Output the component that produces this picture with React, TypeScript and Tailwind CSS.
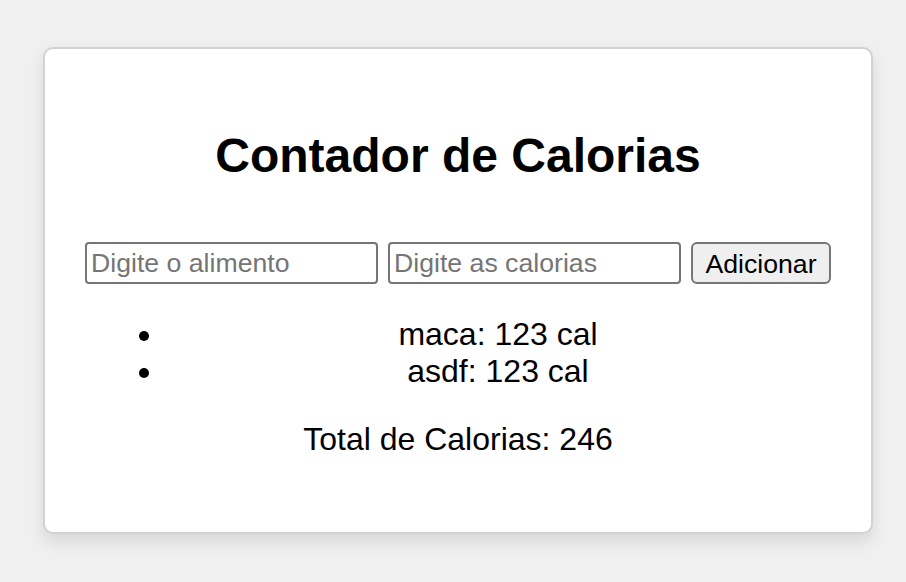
import { useState } from "react";

type Item = { name: string; calories: number };

const initialItems: Item[] = [
  { name: "maca", calories: 123 },
  { name: "asdf", calories: 123 },
];

export default function App() {
  const [items, setItems] = useState<Item[]>(initialItems);
  const [food, setFood] = useState("");
  const [calories, setCalories] = useState("");

  const total = items.reduce((sum, item) => sum + item.calories, 0);

  const addItem = () => {
    const value = Number(calories);
    if (!food || !value) return;
    setItems((prev) => [...prev, { name: food, calories: value }]);
    setFood("");
    setCalories("");
  };

  return (
    <div className="min-h-[582px] bg-[#f0f0f0] pt-[47px] pl-[43px] font-['Liberation_Sans',Arial,sans-serif] text-black">
      <div className="w-[830px] rounded-[10px] border-2 border-[#d2d2d2] bg-white px-[40px] pt-[79px] pb-[74px] shadow-[0_8px_16px_rgba(0,0,0,0.1)]">
        <h1 className="text-center text-[48px] leading-[55px] font-bold">Contador de Calorias</h1>

        <div className="mt-[59px] flex justify-center gap-[10px]">
          <input
            className="h-[42px] w-[293px] rounded-[4px] border-2 border-[#767676] px-[4px] text-[26.67px] placeholder:text-[#757575] outline-none"
            placeholder="Digite o alimento"
            value={food}
            onChange={(e) => setFood(e.target.value)}
          />
          <input
            className="h-[42px] w-[293px] rounded-[4px] border-2 border-[#767676] px-[4px] text-[26.67px] placeholder:text-[#757575] outline-none"
            placeholder="Digite as calorias"
            type="text"
            value={calories}
            onChange={(e) => setCalories(e.target.value)}
          />
          <button
            className="h-[42px] w-[142px] rounded-[6px] border-2 border-[#767676] bg-[#efefef] text-[26.67px]"
            type="button"
            onClick={addItem}
          >
            Adicionar
          </button>
        </div>

        <ul className="mt-[32px] list-disc pl-[80px] text-center text-[32px] leading-[37px]">
          {items.map((item, index) => (
            <li key={index}>
              {item.name}: {item.calories} cal
            </li>
          ))}
        </ul>

        <p className="mt-[31px] text-center text-[32px] leading-[37px]">Total de Calorias: {total}</p>
      </div>
    </div>
  );
}
